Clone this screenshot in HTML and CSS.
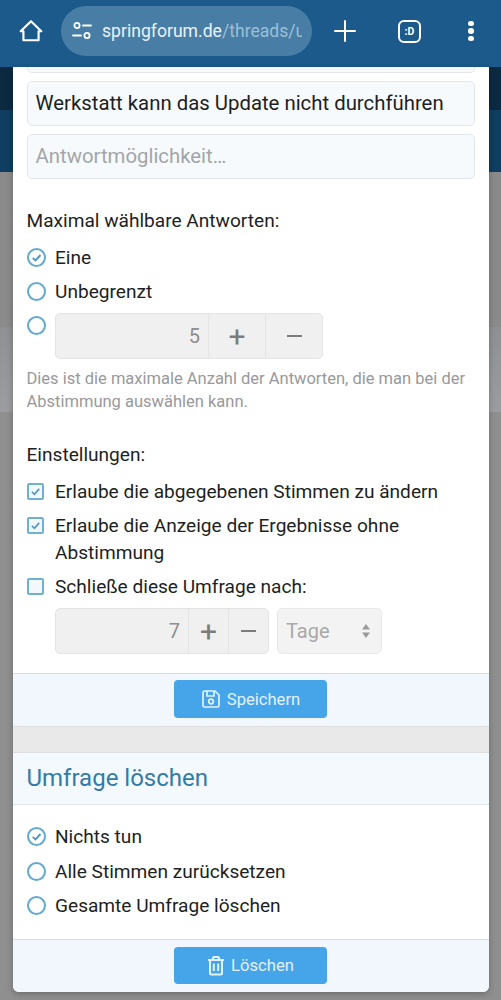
FILE: index.html
```html
<!DOCTYPE html>
<html lang="de">
<head>
    <meta charset="UTF-8">
    <meta name="viewport" content="width=device-width, initial-scale=1.0">
    <title>Umfrage bearbeiten</title>
    <link rel="stylesheet" href="styles.css">
</head>
<body>
    <!-- Browser toolbar -->
    <header class="toolbar">
        <svg class="tool-icon home-icon" viewBox="0 0 24 24"><path d="M2.500 12.200 12 3l9.500 9.200H19v8.300H5v-8.300z"/></svg>
        <div class="address">
            <svg class="tune-icon" viewBox="0 0 20 20"><circle cx="5" cy="4.500" r="2.600"/><path d="M11 4.500h8M1 14.500h8"/><circle cx="15" cy="14.500" r="2.600"/></svg>
            <span class="url">springforum.de<span class="url-path">/threads/u</span></span>
        </div>
        <svg class="tool-icon plus-icon" viewBox="0 0 24 24"><path d="M12 2v20M2 12h20"/></svg>
        <div class="tab-count">:D</div>
        <div class="menu-dots"><i></i><i></i><i></i></div>
    </header>

    <!-- Dimmed page behind the dialog -->
    <div class="backdrop">
        <div class="band band-nav"></div>
        <div class="band band-sub"></div>
        <div class="band band-grey"></div>
        <div class="band band-light"></div>
        <div class="band band-rest"></div>
    </div>

    <div class="dialog">
        <section class="form-body">
            <div class="text-field clipped"></div>
            <div class="text-field">Werkstatt kann das Update nicht durchführen</div>
            <div class="text-field placeholder">Antwortmöglichkeit…</div>

            <h3 class="group-label first">Maximal wählbare Antworten:</h3>
            <div class="option"><span class="radio checked"><svg viewBox="0 0 12 12"><path d="M3 6.300 5.200 8.400 9.200 4"/></svg></span>Eine</div>
            <div class="option"><span class="radio"></span>Unbegrenzt</div>
            <div class="option spinner-option">
                <span class="radio"></span>
                <div class="spinner wide">
                    <span class="spin-value">5</span>
                    <span class="spin-btn">+</span>
                    <span class="spin-btn"><b class="minus"></b></span>
                </div>
            </div>
            <p class="hint">Dies ist die maximale Anzahl der Antworten, die man bei der Abstimmung auswählen kann.</p>

            <h3 class="group-label second">Einstellungen:</h3>
            <div class="option"><span class="check checked"><svg viewBox="0 0 12 12"><path d="M2.600 6.200 5 8.600 9.400 3.600"/></svg></span>Erlaube die abgegebenen Stimmen zu ändern</div>
            <div class="option"><span class="check checked"><svg viewBox="0 0 12 12"><path d="M2.600 6.200 5 8.600 9.400 3.600"/></svg></span>Erlaube die Anzeige der Ergebnisse ohne Abstimmung</div>
            <div class="option"><span class="check"></span>Schließe diese Umfrage nach:</div>
            <div class="duration">
                <div class="spinner narrow">
                    <span class="spin-value">7</span>
                    <span class="spin-btn">+</span>
                    <span class="spin-btn"><b class="minus"></b></span>
                </div>
                <div class="unit-select">Tage
                    <svg viewBox="0 0 10 16"><path d="M5 1 9 6.500H1zM5 15 1 9.500h8z"/></svg>
                </div>
            </div>
        </section>
        <footer class="form-footer">
            <button class="action-btn">
                <svg viewBox="0 0 20 20"><path d="M2 3.500A1.500 1.500 0 0 1 3.500 2H14l4 4v10.500a1.500 1.500 0 0 1-1.500 1.500h-13A1.500 1.500 0 0 1 2 16.500z"/><path d="M6 2v5h7V2"/><circle cx="10" cy="12.500" r="2.300"/></svg>
                Speichern
            </button>
        </footer>

        <div class="divider"></div>

        <h2 class="section-title">Umfrage löschen</h2>
        <section class="delete-body">
            <div class="option"><span class="radio checked"><svg viewBox="0 0 12 12"><path d="M3 6.300 5.200 8.400 9.200 4"/></svg></span>Nichts tun</div>
            <div class="option"><span class="radio"></span>Alle Stimmen zurücksetzen</div>
            <div class="option"><span class="radio"></span>Gesamte Umfrage löschen</div>
        </section>
        <footer class="form-footer last">
            <button class="action-btn">
                <svg class="trash" viewBox="0 0 18 20"><path d="M1 4.500h16M6 4.500V2.500A1 1 0 0 1 7 1.500h4a1 1 0 0 1 1 1v2M3 4.500V17.500A1.500 1.500 0 0 0 4.500 19h9a1.500 1.500 0 0 0 1.500-1.500V4.500M6.800 8v7.500M11.200 8v7.500"/></svg>
                Löschen
            </button>
        </footer>
    </div>
</body>
</html>
```

FILE: styles.css
```css
* {
    box-sizing: border-box;
}

html, body {
    margin: 0;
    height: 1000px;
    overflow: hidden;
}

body {
    position: relative;
    font-family: Roboto, "Liberation Sans", sans-serif;
    color: #1d1f22;
    background: #8d8d8d;
}

/* Browser toolbar */
.toolbar {
    height: 67px;
    background: #1b5a8b;
    display: flex;
    align-items: center;
    padding: 0 0 5px 18px;
}

.tool-icon {
    fill: none;
    stroke: #fff;
    stroke-width: 2;
    stroke-linejoin: round;
    stroke-linecap: round;
    flex: none;
}

.home-icon {
    width: 26px;
    height: 26px;
}

.plus-icon {
    width: 24px;
    height: 24px;
    margin-left: 21px;
}

.address {
    width: 251px;
    height: 50px;
    margin-left: 17px;
    border-radius: 25px;
    background: #487ea6;
    display: flex;
    align-items: center;
    padding-left: 11px;
    padding-right: 10px;
    overflow: hidden;
    flex: none;
}

.tune-icon {
    width: 20px;
    height: 20px;
    flex: none;
    fill: none;
    stroke: #fff;
    stroke-width: 1.800;
    stroke-linecap: round;
}

.url {
    margin-left: 10px;
    font-size: 17.600px;
    color: #e9f2f8;
    white-space: nowrap;
    overflow: hidden;
}

.url-path {
    color: #9dbfd6;
}

.tab-count {
    width: 23px;
    height: 23px;
    margin-left: 41px;
    border: 2px solid #fff;
    border-radius: 6px;
    color: #fff;
    font-size: 10.500px;
    font-weight: 700;
    display: flex;
    align-items: center;
    justify-content: center;
    flex: none;
}

.menu-dots {
    margin-left: 47px;
    display: flex;
    flex-direction: column;
    gap: 2px;
}

.menu-dots i {
    width: 5.500px;
    height: 5.500px;
    border-radius: 50%;
    background: #fff;
}

/* Page behind the dialog */
.backdrop {
    display: flex;
    flex-direction: column;
    height: 933px;
}

.band-nav {
    height: 43px;
    background: #0b2a42;
}

.band-sub {
    height: 62px;
    background: #0f3e60;
}

.band-grey {
    height: 155px;
    background: #8b8a8b;
}

.band-light {
    height: 85px;
    background: linear-gradient(#8f9093, #9c9da0);
}

.band-rest {
    flex: 1;
    background: #8f8f8f;
}

/* Dialog */
.dialog {
    position: absolute;
    left: 13px;
    top: 67px;
    width: 476px;
    height: 925px;
    background: #fff;
    border-radius: 0 0 6px 6px;
    overflow: hidden;
    box-shadow: 0 2px 6px rgba(0, 0, 0, 0.25);
    display: flex;
    flex-direction: column;
}

.form-body {
    height: 606px;
    padding: 0 14px 0 13.500px;
    flex: none;
}

.text-field {
    height: 45px;
    margin-bottom: 8px;
    padding-left: 8px;
    background: #f7fafd;
    border: 1px solid #e3e6ea;
    border-radius: 5px;
    font-size: 20.350px;
    line-height: 43px;
    white-space: nowrap;
}

.text-field.clipped {
    height: 6px;
    margin-bottom: 8px;
    border-radius: 0 0 5px 5px;
    border-top: none;
}

.text-field.placeholder {
    color: #a3a5a8;
}

.group-label {
    margin: 0;
    font-size: 19.100px;
    font-weight: 400;
    line-height: 24px;
}

.group-label.first {
    margin-top: 30px;
}

.group-label.second {
    margin-top: 30px;
}

.option {
    display: flex;
    font-size: 19.100px;
    line-height: 27px;
    margin-top: 7px;
    padding-left: 28.500px;
    position: relative;
}

.group-label + .option {
    margin-top: 11px;
}

.radio, .check {
    position: absolute;
    left: 0;
    top: 4px;
    width: 19px;
    height: 19px;
    border: 2px solid #63a9cf;
    background: #fff;
}

.radio {
    border-radius: 50%;
}

.check {
    width: 17px;
    height: 17px;
    top: 5px;
    border-radius: 2px;
    border-color: #6fb0d3;
    background: #f3f8fc;
}

.radio svg, .check svg {
    display: block;
    width: 100%;
    height: 100%;
    fill: none;
    stroke: #4d97c2;
    stroke-width: 1.500;
}

.spinner-option {
    margin-top: 8px;
}

.spinner-option .radio {
    top: 3px;
}

.spinner {
    display: flex;
    height: 46px;
    background: #f0f0f0;
    border: 1px solid #e4e4e4;
    border-radius: 5px;
    color: #8e8e8e;
    font-size: 20px;
    overflow: hidden;
}

.spinner.wide {
    width: 268px;
}

.spinner.narrow {
    width: 214px;
}

.spin-value {
    flex: 1;
    text-align: right;
    line-height: 44px;
    padding-right: 8px;
}

.spin-btn {
    border-left: 1px solid #e4e4e4;
    display: flex;
    align-items: center;
    justify-content: center;
    font-size: 30px;
    font-weight: 400;
    color: #7c7c7c;
}

.wide .spin-btn {
    width: 57px;
}

.narrow .spin-btn {
    width: 40px;
}

.minus {
    width: 15px;
    height: 2.500px;
    background: #7c7c7c;
}

.hint {
    margin: 8px 0 0;
    font-size: 16.500px;
    line-height: 23px;
    color: #98999b;
}

.duration {
    display: flex;
    gap: 8px;
    margin: 8px 0 0 28.500px;
}

.unit-select {
    width: 105px;
    height: 46px;
    padding: 0 10px 0 8px;
    background: #f3f3f3;
    border: 1px solid #e9e9e9;
    border-radius: 5px;
    color: #a9a9a9;
    font-size: 20px;
    display: flex;
    align-items: center;
    justify-content: space-between;
}

.unit-select svg {
    width: 10px;
    height: 16px;
    fill: #9b9b9b;
}

/* Footers and buttons */
.form-footer {
    height: 53px;
    background: #f2f7fd;
    border-top: 1px solid #d9dcdf;
    display: flex;
    justify-content: center;
    padding: 6px 1px 0 0;
    flex: none;
}

.form-footer.last {
    flex: 1;
    padding-top: 7px;
}

.action-btn {
    width: 153px;
    height: 38px;
    background: #45a5e8;
    border: none;
    border-radius: 4px;
    color: #e4f1fb;
    font: 400 16.600px Roboto, "Liberation Sans", sans-serif;
    display: flex;
    align-items: center;
    justify-content: center;
    gap: 6px;
}

.action-btn svg {
    width: 20px;
    height: 20px;
    fill: none;
    stroke: #e4f1fb;
    stroke-width: 1.700;
}

.action-btn svg.trash {
    width: 18px;
    height: 21px;
    stroke-width: 2;
}

.last .action-btn {
    height: 37px;
}

.divider {
    height: 27px;
    flex: none;
    background: #e9e9e9;
    border-top: 1px solid #dedede;
    border-bottom: 1px solid #dedede;
}

.section-title {
    height: 52px;
    margin: 0;
    flex: none;
    padding-left: 13.500px;
    background: #f4f9fe;
    border-bottom: 1px solid #e0e3e6;
    color: #347ba6;
    font-size: 24px;
    font-weight: 400;
    line-height: 50px;
}

.delete-body {
    height: 134px;
    flex: none;
    padding: 11px 14px 0 13.500px;
}

.delete-body .option + .option {
    margin-top: 7px;
}

.delete-body .option:nth-child(2) {
    margin-top: 8px;
}
```
